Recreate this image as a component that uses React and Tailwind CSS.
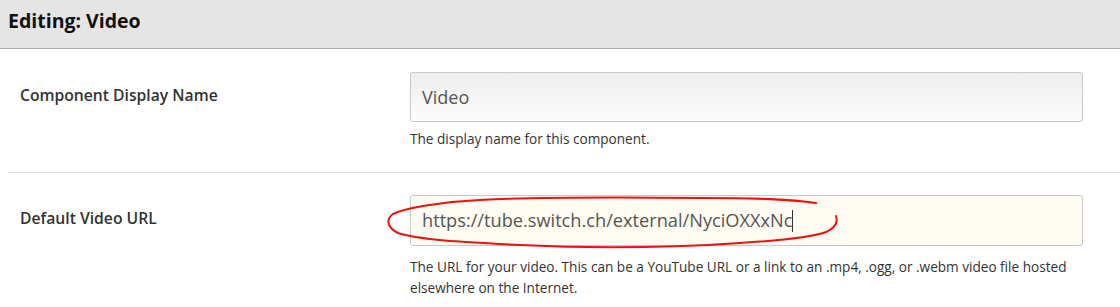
import React from "react";

const fields = [
  {
    label: "Component Display Name",
    value: "Video",
    help: "The display name for this component.",
    focused: false,
    pad: "pt-[23px]",
    helpGap: "mt-[6px]",
  },
  {
    label: "Default Video URL",
    value: "https://tube.switch.ch/external/NyciOXXxNc",
    help:
      "The URL for your video. This can be a YouTube URL or a link to an .mp4, .ogg, or .webm video file hosted elsewhere on the Internet.",
    focused: true,
    pad: "pt-[22px]",
    helpGap: "mt-[10px]",
  },
];

function Field({ field }) {
  return (
    <div className={"flex border-b border-[#e5e5e5] pb-[23px] " + field.pad}>
      <div className="w-[402px] shrink-0 pl-[12px] pt-[13px] text-[15.7px] leading-[20px] font-semibold text-[#333]">
        {field.label}
      </div>
      <div className="w-[673px] shrink-0">
        <div
          className={
            field.focused
              ? "h-[51px] flex items-center rounded-[3px] border border-[#c8c8c8] bg-[#fffcf3] px-[11px] text-[18.2px] text-[#555]"
              : "h-[50px] flex items-center rounded-[3px] border border-[#c8c8c8] bg-gradient-to-b from-[#eeeeee] to-[#fcfcfc] px-[11px] text-[18px] text-[#555]"
          }
        >
          <span>{field.value}</span>
          {field.focused && (
            <span className="inline-block w-px h-[22px] bg-[#333]" />
          )}
        </div>
        <p className={field.helpGap + " text-[13.6px] leading-[21px] text-[#333]"}>
          {field.help}
        </p>
      </div>
    </div>
  );
}

export default function App() {
  return (
    <div
      className="relative w-[1120px] h-[307px] overflow-hidden bg-white"
      style={{ fontFamily: '"Open Sans", "Liberation Sans", sans-serif' }}
    >
      <div className="h-[49px] bg-[#e5e5e5] border-b border-[#b0b0b0] pl-[8px] pt-[8px]">
        <h1 className="text-[19.5px] leading-[26px] font-bold text-[#111]">
          Editing: Video
        </h1>
      </div>

      <div className="pl-[8px]">
        {fields.map(f => (
          <Field key={f.label} field={f} />
        ))}
      </div>

      {/* hand-drawn red annotation */}
      <svg
        className="absolute inset-0 pointer-events-none"
        width="1120"
        height="307"
        viewBox="0 0 1120 307"
      >
        <path
          d="M816 203 C790 199 760 198 700 198 C620 197 540 197 480 200 C440 202 405 208 393 214 C385 220 388 228 398 233 C420 240 460 242 520 245 C600 249 680 247 740 243 C790 240 815 236 826 232 C835 228 838 222 836 216"
          fill="none"
          stroke="#ee1111"
          strokeWidth="2"
          strokeLinecap="round"
        />
      </svg>
    </div>
  );
}
